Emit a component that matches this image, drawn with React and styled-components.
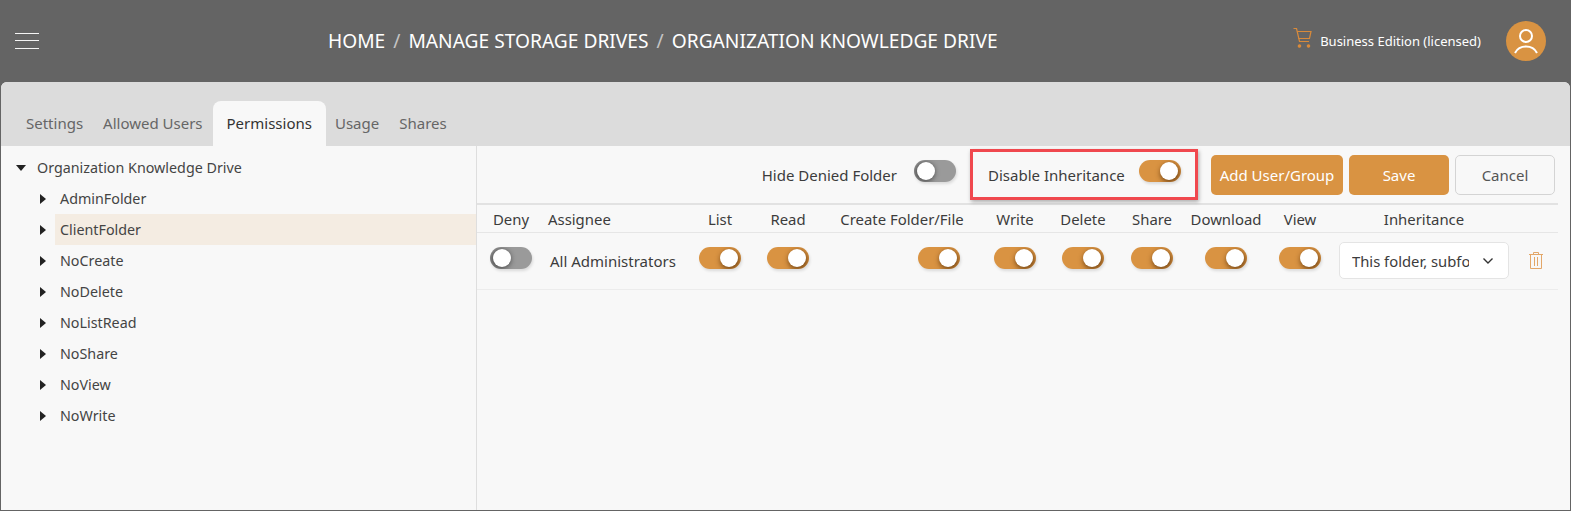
import React from "react";
import styled, { createGlobalStyle } from "styled-components";

const GlobalStyle = createGlobalStyle`
  html, body {
    margin: 0;
    padding: 0;
    background: #646464;
  }
  body {
    font-family: "Noto Sans", "Open Sans", sans-serif;
    color: #333;
  }
`;

const Page = styled.div`
  width: 1571px;
  height: 511px;
  display: flex;
  flex-direction: column;
  background: #646464;
  overflow: hidden;
`;

const Header = styled.header`
  height: 82px;
  flex: none;
  display: flex;
  align-items: center;
  padding: 0 25px 0 15px;
  box-sizing: border-box;
`;

const Burger = styled.div`
  width: 24px;
  height: 16px;
  margin-top: -1px;
  display: flex;
  flex-direction: column;
  justify-content: space-between;
  span {
    display: block;
    height: 1px;
    background: #f4f4f4;
  }
`;

const Crumbs = styled.nav`
  margin-left: 289px;
  font-size: 19.2px;
  color: #fff;
  display: flex;
  gap: 8px;
  white-space: nowrap;
  margin-top: -2px;
  i {
    font-style: normal;
    color: #c4c4c4;
  }
`;

const HeaderRight = styled.div`
  margin-left: auto;
  display: flex;
  align-items: center;
`;

const CartWrap = styled.span`
  display: flex;
  margin-top: -6px;
`;

const Edition = styled.span`
  font-size: 13px;
  color: #fff;
  margin: 0 25px 0 8px;
`;

const Avatar = styled.div`
  width: 40px;
  height: 40px;
  border-radius: 50%;
  background: #d99342;
  display: flex;
  align-items: center;
  justify-content: center;
`;

const Panel = styled.main`
  flex: 1;
  margin: 0 1px 1px;
  border-radius: 6px 6px 0 0;
  background: #f8f8f8;
  display: flex;
  flex-direction: column;
  overflow: hidden;
`;

const TabBar = styled.div`
  height: 64px;
  flex: none;
  background: #dcdcdc;
  display: flex;
  align-items: flex-end;
  padding-left: 15px;
  box-sizing: border-box;
`;

const Tab = styled.div`
  height: 45px;
  box-sizing: border-box;
  padding: 0 ${(p) => (p.$active ? "14px" : "10px")} 2px;
  margin-right: ${(p) => (p.$active ? "-1px" : "0")};
  display: flex;
  align-items: center;
  font-size: 15px;
  color: ${(p) => (p.$active ? "#333" : "#666")};
  background: ${(p) => (p.$active ? "#f8f8f8" : "transparent")};
  border-radius: 8px 8px 0 0;
`;

const Body = styled.div`
  flex: 1;
  display: flex;
  min-height: 0;
`;

const Tree = styled.aside`
  width: 476px;
  flex: none;
  box-sizing: border-box;
  border-right: 1px solid #dedede;
  padding-top: 6px;
`;

const TreeRow = styled.div`
  height: 31px;
  display: flex;
  align-items: center;
  font-size: 14.3px;
  color: #444;
  padding-left: ${(p) => (p.$root ? "15px" : "39px")};
`;

const Caret = styled.span`
  width: 0;
  height: 0;
  flex: none;
  ${(p) =>
    p.$open
      ? `border-left: 5.5px solid transparent;
         border-right: 5.5px solid transparent;
         border-top: 6px solid #222;
         margin-right: 11px;`
      : `border-top: 5.5px solid transparent;
         border-bottom: 5.5px solid transparent;
         border-left: 6px solid #222;
         margin-right: 9px;`}
`;

const TreeLabel = styled.span`
  flex: 1;
  height: 100%;
  display: flex;
  align-items: center;
  padding-left: ${(p) => (p.$root ? "0" : "5px")};
  background: ${(p) => (p.$selected ? "#f4ece2" : "transparent")};
`;

const Content = styled.section`
  flex: 1;
  min-width: 0;
  padding-right: 12px;
`;

const Toolbar = styled.div`
  height: 59px;
  box-sizing: border-box;
  border-bottom: 2px solid #e2e2e2;
  display: flex;
  align-items: center;
  justify-content: flex-end;
  padding-right: 3px;
`;

const ToolLabel = styled.span`
  font-size: 15px;
  color: #3c3c3c;
  white-space: nowrap;
  margin-right: 17px;
`;

const Highlight = styled.div`
  width: 228px;
  height: 51px;
  box-sizing: border-box;
  border: 3px solid #f0484e;
  box-shadow: 1px 2px 4px rgba(0, 0, 0, 0.3);
  display: flex;
  align-items: center;
  justify-content: space-between;
  padding: 0 14px 0 15px;
  margin: 0 7px 0 14px;
  ${ToolLabel} {
    margin-right: 0;
  }
`;

const ToolSwitch = styled.span`
  display: flex;
  margin-top: -8px;
`;

const Button = styled.button`
  height: 40px;
  width: ${(p) => p.$width}px;
  margin-left: 6px;
  border-radius: 5px;
  box-sizing: border-box;
  font-family: inherit;
  font-size: 15px;
  padding: 0;
  border: ${(p) => (p.$ghost ? "1px solid #d4d4d4" : "none")};
  background: ${(p) => (p.$ghost ? "#f8f8f8" : "#d99342")};
  color: ${(p) => (p.$ghost ? "#555" : "#fff")};
`;

const Switch = styled.span`
  position: relative;
  display: inline-block;
  width: 42px;
  height: 22px;
  flex: none;
  overflow: hidden;
  border-radius: 11px;
  background: ${(p) => (p.$on ? "#d99342" : "#9a9a9a")};
  box-shadow: 1px 2px 3px rgba(0, 0, 0, 0.12);
  &::after {
    content: "";
    position: absolute;
    top: 2px;
    left: ${(p) => (p.$on ? "21px" : "3px")};
    width: 18px;
    height: 18px;
    border-radius: 50%;
    background: #fff;
    box-shadow: ${(p) =>
      p.$on
        ? "1px 2px 5px 1px rgba(70, 35, 0, 0.6)"
        : "-1px 1px 5px 1px rgba(30, 30, 30, 0.6)"};
  }
`;

const COLUMNS = "62px 148px 60px 76px 152px 74px 62px 76px 72px 76px 172px 48px";

const GridHead = styled.div`
  display: grid;
  grid-template-columns: ${COLUMNS};
  height: 28px;
  box-sizing: border-box;
  padding-left: 3px;
  align-items: center;
  border-bottom: 1px solid #e6e6e6;
`;

const HeadCell = styled.div`
  font-size: 14.9px;
  color: #3c3c3c;
  text-align: ${(p) => (p.$left ? "left" : "center")};
  padding-left: ${(p) => (p.$left ? "6px" : "0")};
  white-space: nowrap;
`;

const GridRow = styled.div`
  display: grid;
  grid-template-columns: ${COLUMNS};
  height: 57px;
  box-sizing: border-box;
  padding-left: 3px;
  align-items: center;
  border-bottom: 1px solid #ececec;
`;

const SwitchCell = styled.div`
  display: flex;
  justify-content: ${(p) => (p.$end ? "flex-end" : "center")};
  padding-right: ${(p) => (p.$end ? "18px" : "0")};
  margin-top: -7px;
`;

const Assignee = styled.div`
  font-size: 15px;
  color: #3c3c3c;
  padding-left: 8px;
  white-space: nowrap;
`;

const Select = styled.div`
  width: 170px;
  height: 37px;
  box-sizing: border-box;
  margin-left: 1px;
  margin-top: -1px;
  background: #fff;
  border: 1px solid #e4e4e4;
  border-radius: 5px;
  display: flex;
  align-items: center;
  padding: 0 14px 0 12px;
  font-size: 14.8px;
  color: #3c3c3c;
  span {
    flex: 1;
    overflow: hidden;
    white-space: nowrap;
    margin-right: 13px;
  }
`;

const TrashCell = styled.div`
  display: flex;
  justify-content: center;
  padding-left: 3px;
  margin-top: -2px;
`;

const folders = ["AdminFolder", "ClientFolder", "NoCreate", "NoDelete", "NoListRead", "NoShare", "NoView", "NoWrite"];
const tabs = ["Settings", "Allowed Users", "Permissions", "Usage", "Shares"];
const headers = ["Deny", "Assignee", "List", "Read", "Create Folder/File", "Write", "Delete", "Share", "Download", "View", "Inheritance"];

function CartIcon() {
  return (
    <svg width="19" height="20" viewBox="0 0 19 20" fill="none" stroke="#d98a3a" strokeWidth="1.2">
      <path d="M0.5 0.5H3.5L6.5 13.5H16" />
      <path d="M4 3.5H18L16.5 10.5H5.5" />
      <circle cx="6.5" cy="18" r="1.2" fill="#d98a3a" />
      <circle cx="15.5" cy="18" r="1.2" fill="#d98a3a" />
    </svg>
  );
}

function UserIcon() {
  return (
    <svg width="24" height="25" viewBox="0 0 24 25" fill="none" stroke="#fff" strokeWidth="2">
      <circle cx="12" cy="7" r="6" />
      <path d="M1 24C3 20 7 17.5 12 17.5C17 17.5 21 20 23 24" />
    </svg>
  );
}

function TrashIcon() {
  return (
    <svg width="14" height="17" viewBox="0 0 14 17" fill="none" stroke="#e3a769" strokeWidth="1">
      <path d="M0 2.5H14" />
      <path d="M4.5 2.5V0.5H9.5V2.5" />
      <path d="M1.5 2.5V16.5H12.5V2.5" />
      <path d="M5.5 5V14M8.5 5V14" />
    </svg>
  );
}

function Chevron() {
  return (
    <svg width="12" height="8" viewBox="0 0 12 8" fill="none" stroke="#333" strokeWidth="1.4" style={{ flex: "none" }}>
      <path d="M1.5 1.5L6 6L10.5 1.5" />
    </svg>
  );
}

export default function App() {
  return (
    <Page>
      <GlobalStyle />
      <Header>
        <Burger>
          <span />
          <span />
          <span />
        </Burger>
        <Crumbs>
          HOME <i>/</i> MANAGE STORAGE DRIVES <i>/</i> ORGANIZATION KNOWLEDGE DRIVE
        </Crumbs>
        <HeaderRight>
          <CartWrap>
            <CartIcon />
          </CartWrap>
          <Edition>Business Edition (licensed)</Edition>
          <Avatar>
            <UserIcon />
          </Avatar>
        </HeaderRight>
      </Header>
      <Panel>
        <TabBar>
          {tabs.map((t) => (
            <Tab key={t} $active={t === "Permissions"}>
              {t}
            </Tab>
          ))}
        </TabBar>
        <Body>
          <Tree>
            <TreeRow $root>
              <Caret $open />
              <TreeLabel $root>Organization Knowledge Drive</TreeLabel>
            </TreeRow>
            {folders.map((f) => (
              <TreeRow key={f}>
                <Caret />
                <TreeLabel $selected={f === "ClientFolder"}>{f}</TreeLabel>
              </TreeRow>
            ))}
          </Tree>
          <Content>
            <Toolbar>
              <ToolLabel>Hide Denied Folder</ToolLabel>
              <ToolSwitch>
                <Switch />
              </ToolSwitch>
              <Highlight>
                <ToolLabel>Disable Inheritance</ToolLabel>
                <ToolSwitch>
                  <Switch $on />
                </ToolSwitch>
              </Highlight>
              <Button $width={132}>Add User/Group</Button>
              <Button $width={100}>Save</Button>
              <Button $width={100} $ghost>
                Cancel
              </Button>
            </Toolbar>
            <GridHead>
              {headers.map((h) => (
                <HeadCell key={h} $left={h === "Assignee"}>
                  {h}
                </HeadCell>
              ))}
            </GridHead>
            <GridRow>
              <SwitchCell>
                <Switch />
              </SwitchCell>
              <Assignee>All Administrators</Assignee>
              <SwitchCell>
                <Switch $on />
              </SwitchCell>
              <SwitchCell>
                <Switch $on />
              </SwitchCell>
              <SwitchCell $end>
                <Switch $on />
              </SwitchCell>
              <SwitchCell>
                <Switch $on />
              </SwitchCell>
              <SwitchCell>
                <Switch $on />
              </SwitchCell>
              <SwitchCell>
                <Switch $on />
              </SwitchCell>
              <SwitchCell>
                <Switch $on />
              </SwitchCell>
              <SwitchCell>
                <Switch $on />
              </SwitchCell>
              <Select>
                <span>This folder, subfolders and files</span>
                <Chevron />
              </Select>
              <TrashCell>
                <TrashIcon />
              </TrashCell>
            </GridRow>
          </Content>
        </Body>
      </Panel>
    </Page>
  );
}
